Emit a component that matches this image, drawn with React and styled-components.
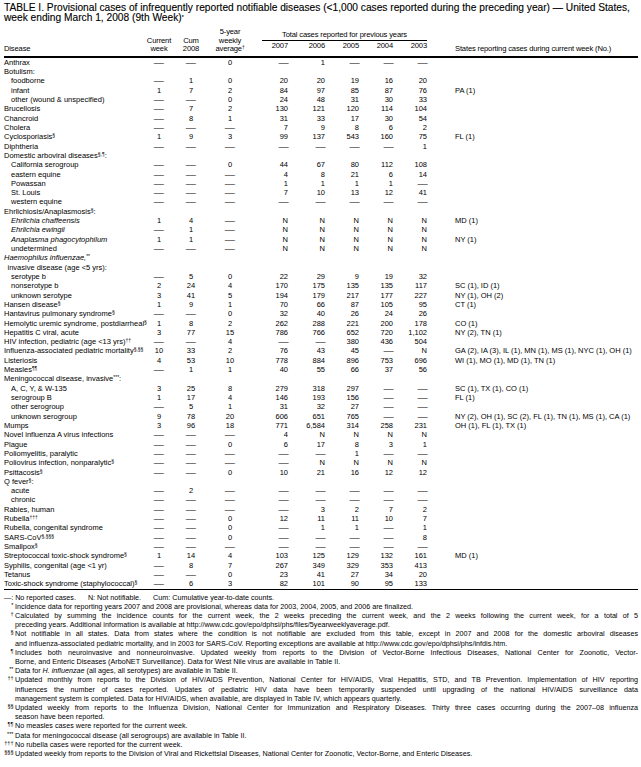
import React from "react";
import styled, { createGlobalStyle } from "styled-components";

const GlobalStyle = createGlobalStyle`
  html, body { margin: 0; padding: 0; background: #fff; }
  body {
    font-family: "Liberation Sans", Arial, Helvetica, sans-serif;
    color: #000;
  }
`;

const COLS = "142px 26px 38px 40px 38px 37px 34px 34px 34px 1fr";

const Page = styled.div`
  width: 641px;
  box-sizing: border-box;
  padding: 3px 3px 6px 4px;
`;

const Title = styled.h1`
  margin: 0;
  font-family: "Liberation Sans", Arial, sans-serif;
  font-size: 10.2px;
  line-height: 10px;
  font-weight: normal;
  -webkit-text-stroke: 0.12px #000;
  white-space: nowrap;
`;

const HeadGrid = styled.div`
  display: grid;
  grid-template-columns: ${COLS};
  grid-template-rows: auto auto;
  margin-top: 5px;
  padding-bottom: 2px;
  border-bottom: 2px solid #000;
  font-size: 7.6px;
  line-height: 8.6px;
  letter-spacing: -0.15px;
  white-space: nowrap;
`;

const HeadCell = styled.div`
  grid-row: 1 / 3;
  align-self: end;
  text-align: ${(p) => p.$align || "center"};
  padding-left: ${(p) => p.$pad || 0}px;
`;

const SpanHead = styled.div`
  grid-column: 5 / 10;
  grid-row: 1;
  align-self: end;
  text-align: center;
  border-bottom: 1px solid #000;
  margin: 0 0 1px 12px;
`;

const YearHead = styled.div`
  grid-row: 2;
  text-align: right;
`;

const Sup = styled.sup`
  font-size: 5px;
  line-height: 0;
  vertical-align: 2.5px;
`;

const Body = styled.div`
  border-bottom: 1.5px solid #000;
  font-size: 7.5px;
`;

const Row = styled.div`
  display: grid;
  grid-template-columns: ${COLS};
  height: 9.32px;
  line-height: 9.32px;
  white-space: nowrap;
`;

const Name = styled.div`
  padding-left: ${(p) => [0, 3.5, 7][p.$level]}px;
`;

const Mid = styled.div`
  text-align: center;
`;

const Year = styled.div`
  text-align: right;
`;

const States = styled.div`
  padding-left: 28px;
`;

const Dash = styled.span`
  display: inline-block;
  transform: scaleX(1.35);
  transform-origin: ${(p) => p.$origin};
`;

const Notes = styled.div`
  margin-top: 3px;
  font-size: 7.2px;
  line-height: 9.2px;
`;

const Legend = styled.div`
  display: flex;
  gap: 12px;
`;

const Note = styled.div`
  display: grid;
  grid-template-columns: 11px 1fr;
`;

const Marker = styled.span`
  text-align: right;
  font-size: 5.5px;
  padding-right: 1.5px;
  transform: translateY(-1.5px);
`;

const NoteLine = styled.div`
  text-align: justify;
  text-align-last: ${(p) => (p.$last ? "left" : "justify")};
`;

const D = "—";

const rows = [
  [0, "Anthrax", null, [D, D, "0", D, "1", D, D, D]],
  [0, "Botulism:", null, null],
  [2, "foodborne", null, [D, "1", "0", "20", "20", "19", "16", "20"]],
  [2, "infant", null, ["1", "7", "2", "84", "97", "85", "87", "76"], "PA (1)"],
  [2, "other (wound & unspecified)", null, [D, D, "0", "24", "48", "31", "30", "33"]],
  [0, "Brucellosis", null, [D, "7", "2", "130", "121", "120", "114", "104"]],
  [0, "Chancroid", null, [D, "8", "1", "31", "33", "17", "30", "54"]],
  [0, "Cholera", null, [D, D, D, "7", "9", "8", "6", "2"]],
  [0, "Cyclosporiasis", "§", ["1", "9", "3", "99", "137", "543", "160", "75"], "FL (1)"],
  [0, "Diphtheria", null, [D, D, D, D, D, D, D, "1"]],
  [0, "Domestic arboviral diseases", "§,¶", null, null, ":"],
  [2, "California serogroup", null, [D, D, "0", "44", "67", "80", "112", "108"]],
  [2, "eastern equine", null, [D, D, D, "4", "8", "21", "6", "14"]],
  [2, "Powassan", null, [D, D, D, "1", "1", "1", "1", D]],
  [2, "St. Louis", null, [D, D, D, "7", "10", "13", "12", "41"]],
  [2, "western equine", null, [D, D, D, D, D, D, D, D]],
  [0, "Ehrlichiosis/Anaplasmosis", "§", null, null, ":"],
  [2, "Ehrlichia chaffeensis", null, ["1", "4", D, "N", "N", "N", "N", "N"], "MD (1)", "", true],
  [2, "Ehrlichia ewingii", null, [D, "1", D, "N", "N", "N", "N", "N"], null, "", true],
  [2, "Anaplasma phagocytophilum", null, ["1", "1", D, "N", "N", "N", "N", "N"], "NY (1)", "", true],
  [2, "undetermined", null, [D, D, D, "N", "N", "N", "N", "N"]],
  [0, "Haemophilus influenzae,", "**", null, null, "", true],
  [1, "invasive disease (age <5 yrs):", null, null],
  [2, "serotype b", null, [D, "5", "0", "22", "29", "9", "19", "32"]],
  [2, "nonserotype b", null, ["2", "24", "4", "170", "175", "135", "135", "117"], "SC (1), ID (1)"],
  [2, "unknown serotype", null, ["3", "41", "5", "194", "179", "217", "177", "227"], "NY (1), OH (2)"],
  [0, "Hansen disease", "§", ["1", "9", "1", "70", "66", "87", "105", "95"], "CT (1)"],
  [0, "Hantavirus pulmonary syndrome", "§", [D, D, "0", "32", "40", "26", "24", "26"]],
  [0, "Hemolytic uremic syndrome, postdiarrheal", "§", ["1", "8", "2", "262", "288", "221", "200", "178"], "CO (1)"],
  [0, "Hepatitis C viral, acute", null, ["3", "77", "15", "786", "766", "652", "720", "1,102"], "NY (2), TN (1)"],
  [0, "HIV infection, pediatric (age <13 yrs)", "††", [D, D, "4", D, D, "380", "436", "504"]],
  [0, "Influenza-associated pediatric mortality", "§,§§", ["10", "33", "2", "76", "43", "45", D, "N"], "GA (2), IA (3), IL (1), MN (1), MS (1), NYC (1), OH (1)"],
  [0, "Listeriosis", null, ["4", "53", "10", "778", "884", "896", "753", "696"], "WI (1), MO (1), MD (1), TN (1)"],
  [0, "Measles", "¶¶", [D, "1", "1", "40", "55", "66", "37", "56"]],
  [0, "Meningococcal disease, invasive", "***", null, null, ":"],
  [2, "A, C, Y, & W-135", null, ["3", "25", "8", "279", "318", "297", D, D], "SC (1), TX (1), CO (1)"],
  [2, "serogroup B", null, ["1", "17", "4", "146", "193", "156", D, D], "FL (1)"],
  [2, "other serogroup", null, [D, "5", "1", "31", "32", "27", D, D]],
  [2, "unknown serogroup", null, ["9", "78", "20", "606", "651", "765", D, D], "NY (2), OH (1), SC (2), FL (1), TN (1), MS (1), CA (1)"],
  [0, "Mumps", null, ["3", "96", "18", "771", "6,584", "314", "258", "231"], "OH (1), FL (1), TX (1)"],
  [0, "Novel influenza A virus infections", null, [D, D, D, "4", "N", "N", "N", "N"]],
  [0, "Plague", null, [D, D, "0", "6", "17", "8", "3", "1"]],
  [0, "Poliomyelitis, paralytic", null, [D, D, D, D, D, "1", D, D]],
  [0, "Poliovirus infection, nonparalytic", "§", [D, D, D, D, "N", "N", "N", "N"]],
  [0, "Psittacosis", "§", [D, D, "0", "10", "21", "16", "12", "12"]],
  [0, "Q fever", "§", null, null, ":"],
  [2, "acute", null, [D, "2", D, D, D, D, D, D]],
  [2, "chronic", null, [D, D, D, D, D, D, D, D]],
  [0, "Rabies, human", null, [D, D, D, D, "3", "2", "7", "2"]],
  [0, "Rubella", "†††", [D, D, "0", "12", "11", "11", "10", "7"]],
  [0, "Rubella, congenital syndrome", null, [D, D, "0", D, "1", "1", D, "1"]],
  [0, "SARS-CoV", "§,§§§", [D, D, "0", D, D, D, D, "8"]],
  [0, "Smallpox", "§", [D, D, D, D, D, D, D, D]],
  [0, "Streptococcal toxic-shock syndrome", "§", ["1", "14", "4", "103", "125", "129", "132", "161"], "MD (1)"],
  [0, "Syphilis, congenital (age <1 yr)", null, [D, "8", "7", "267", "349", "329", "353", "413"]],
  [0, "Tetanus", null, [D, D, "0", "23", "41", "27", "34", "20"]],
  [0, "Toxic-shock syndrome (staphylococcal)", "§", [D, "6", "3", "82", "101", "90", "95", "133"]],
];

const notes = [
  ["*", ["Incidence data for reporting years 2007 and 2008 are provisional, whereas data for 2003, 2004, 2005, and 2006 are finalized."]],
  ["†", [
    "Calculated by summing the incidence counts for the current week, the 2 weeks preceding the current week, and the 2 weeks following the current week, for a total of 5",
    "preceding years. Additional information is available at http://www.cdc.gov/epo/dphsi/phs/files/5yearweeklyaverage.pdf.",
  ]],
  ["§", [
    "Not notifiable in all states. Data from states where the condition is not notifiable are excluded from this table, except in 2007 and 2008 for the domestic arboviral diseases",
    "and influenza-associated pediatric mortality, and in 2003 for SARS-CoV. Reporting exceptions are available at http://www.cdc.gov/epo/dphsi/phs/infdis.htm.",
  ]],
  ["¶", [
    "Includes both neuroinvasive and nonneuroinvasive. Updated weekly from reports to the Division of Vector-Borne Infectious Diseases, National Center for Zoonotic, Vector-",
    "Borne, and Enteric Diseases (ArboNET Surveillance). Data for West Nile virus are available in Table II.",
  ]],
  ["**", [<>Data for <i>H. influenzae</i> (all ages, all serotypes) are available in Table II.</>]],
  ["††", [
    "Updated monthly from reports to the Division of HIV/AIDS Prevention, National Center for HIV/AIDS, Viral Hepatitis, STD, and TB Prevention. Implementation of HIV reporting",
    "influences the number of cases reported. Updates of pediatric HIV data have been temporarily suspended until upgrading of the national HIV/AIDS surveillance data",
    "management system is completed. Data for HIV/AIDS, when available, are displayed in Table IV, which appears quarterly.",
  ]],
  ["§§", [
    "Updated weekly from reports to the Influenza Division, National Center for Immunization and Respiratory Diseases. Thirty three cases occurring during the 2007–08 influenza",
    "season have been reported.",
  ]],
  ["¶¶", ["No measles cases were reported for the current week."]],
  ["***", ["Data for meningococcal disease (all serogroups) are available in Table II."]],
  ["†††", ["No rubella cases were reported for the current week."]],
  ["§§§", ["Updated weekly from reports to the Division of Viral and Rickettsial Diseases, National Center for Zoonotic, Vector-Borne, and Enteric Diseases."]],
];

const val = (v, origin) => (v === D ? <Dash $origin={origin}>—</Dash> : v);

export default function App() {
  return (
    <Page>
      <GlobalStyle />
      <Title>
        TABLE I. Provisional cases of infrequently reported notifiable diseases (&lt;1,000 cases reported during the preceding year) — United States,
        <br />
        week ending March 1, 2008 (9th Week)<Sup>*</Sup>
      </Title>
      <HeadGrid>
        <HeadCell $align="left">Disease</HeadCell>
        <HeadCell>Current<br />week</HeadCell>
        <HeadCell>Cum<br />2008</HeadCell>
        <HeadCell>5-year<br />weekly<br />average<Sup>†</Sup></HeadCell>
        <SpanHead>Total cases reported for previous years</SpanHead>
        <YearHead>2007</YearHead>
        <YearHead>2006</YearHead>
        <YearHead>2005</YearHead>
        <YearHead>2004</YearHead>
        <YearHead>2003</YearHead>
        <HeadCell $align="left" $pad={28}>States reporting cases during current week (No.)</HeadCell>
      </HeadGrid>
      <Body>
        {rows.map(([level, name, sup, vals, states, tail, italic], i) => (
          <Row key={i}>
            <Name $level={level}>
              {italic ? <i>{name}</i> : name}
              {sup && <Sup>{sup}</Sup>}
              {tail}
            </Name>
            {vals ? (
              <>
                <Mid>{val(vals[0], "center")}</Mid>
                <Mid>{val(vals[1], "center")}</Mid>
                <Mid>{val(vals[2], "center")}</Mid>
                {vals.slice(3).map((v, j) => (
                  <Year key={j}>{val(v, "right")}</Year>
                ))}
                <States>{states}</States>
              </>
            ) : null}
          </Row>
        ))}
      </Body>
      <Notes>
        <Legend>
          <span>—: No reported cases.</span>
          <span>N: Not notifiable.</span>
          <span>Cum: Cumulative year-to-date counts.</span>
        </Legend>
        {notes.map(([mark, lines], i) => (
          <Note key={i}>
            <Marker>{mark}</Marker>
            <div>
              {lines.map((l, j) => (
                <NoteLine key={j} $last={j === lines.length - 1}>{l}</NoteLine>
              ))}
            </div>
          </Note>
        ))}
      </Notes>
    </Page>
  );
}
